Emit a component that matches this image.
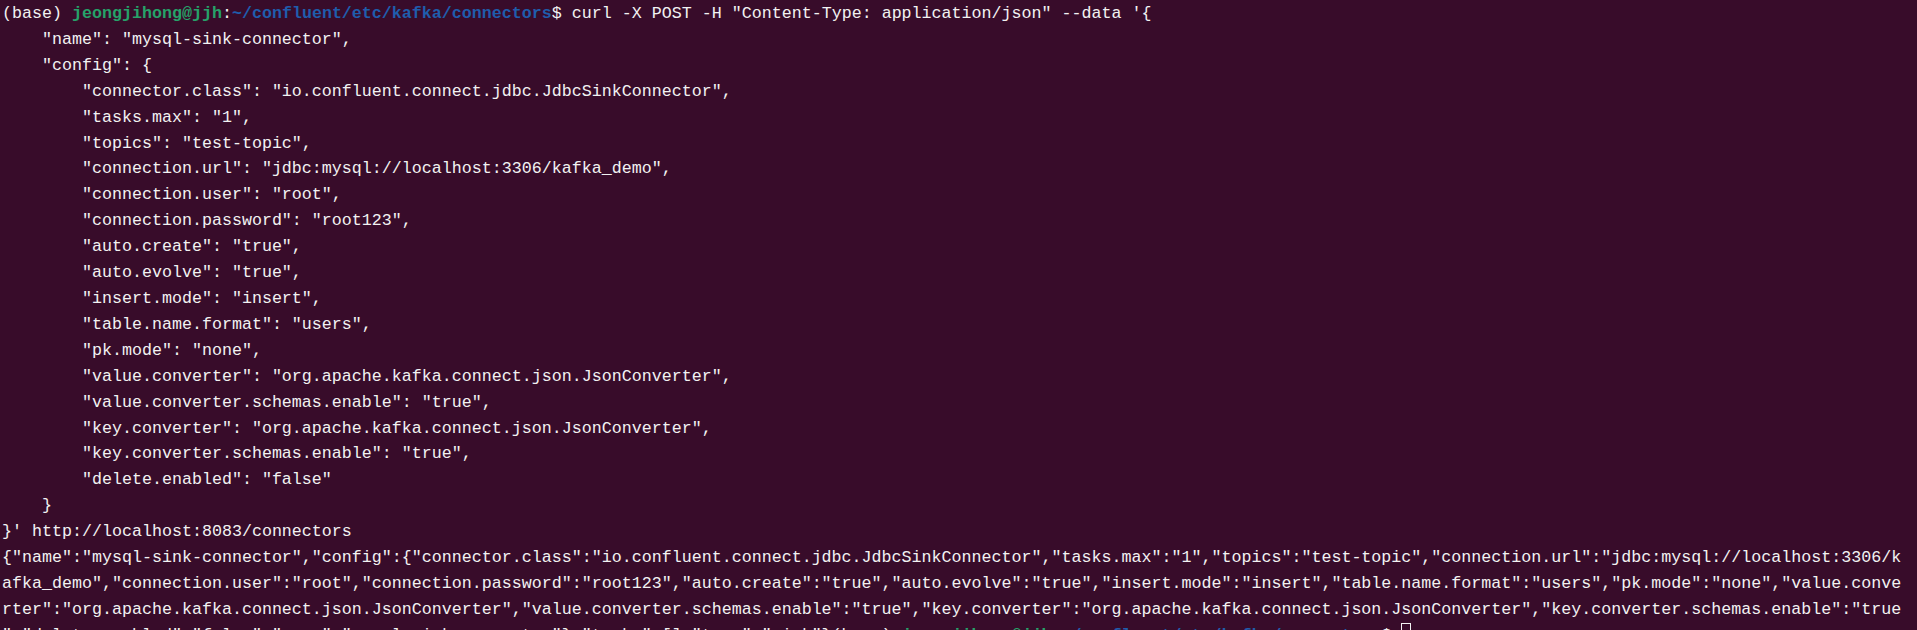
const COLS = 190;

const body = [
  '    "name": "mysql-sink-connector",',
  '    "config": {',
  '        "connector.class": "io.confluent.connect.jdbc.JdbcSinkConnector",',
  '        "tasks.max": "1",',
  '        "topics": "test-topic",',
  '        "connection.url": "jdbc:mysql://localhost:3306/kafka_demo",',
  '        "connection.user": "root",',
  '        "connection.password": "root123",',
  '        "auto.create": "true",',
  '        "auto.evolve": "true",',
  '        "insert.mode": "insert",',
  '        "table.name.format": "users",',
  '        "pk.mode": "none",',
  '        "value.converter": "org.apache.kafka.connect.json.JsonConverter",',
  '        "value.converter.schemas.enable": "true",',
  '        "key.converter": "org.apache.kafka.connect.json.JsonConverter",',
  '        "key.converter.schemas.enable": "true",',
  '        "delete.enabled": "false"',
  '    }',
  "}' http://localhost:8083/connectors",
];

const response =
  '{"name":"mysql-sink-connector","config":{"connector.class":"io.confluent.connect.jdbc.JdbcSinkConnector","tasks.max":"1","topics":"test-topic","connection.url":"jdbc:mysql://localhost:3306/kafka_demo","connection.user":"root","connection.password":"root123","auto.create":"true","auto.evolve":"true","insert.mode":"insert","table.name.format":"users","pk.mode":"none","value.converter":"org.apache.kafka.connect.json.JsonConverter","value.converter.schemas.enable":"true","key.converter":"org.apache.kafka.connect.json.JsonConverter","key.converter.schemas.enable":"true","delete.enabled":"false","name":"mysql-sink-connector"},"tasks":[],"type":"sink"}';

// terminal wraps at 190 columns
function chunk(str, size) {
  const out = [];
  for (let i = 0; i < str.length; i += size) out.push(str.slice(i, i + size));
  return out;
}

function Prompt() {
  return (
    <>
      (base){' '}
      <span className="font-bold text-[#26a269]">jeongjihong@jjh</span>:
      <span className="font-bold text-[#1f5dac]">~/confluent/etc/kafka/connectors</span>$
    </>
  );
}

export default function App() {
  const wrapped = chunk(response, COLS);
  const last = wrapped.pop();

  return (
    <div
      className="h-[630px] w-full overflow-hidden bg-[#380c2a] pl-[2px] pt-[1px] text-[16.67px] leading-[25.9px] text-[#f2f2f2]"
      style={{ fontFamily: '"Liberation Mono", "DejaVu Sans Mono", monospace' }}
    >
      <div className="whitespace-pre">
        <Prompt /> curl -X POST -H "Content-Type: application/json" --data '{'{'}
      </div>
      {body.map((line, i) => (
        <div key={i} className="whitespace-pre">
          {line}
        </div>
      ))}
      {wrapped.map((line, i) => (
        <div key={'r' + i} className="whitespace-pre">
          {line}
        </div>
      ))}
      <div className="whitespace-pre">
        {last}
        <Prompt />{' '}
        <span className="inline-block h-[22px] w-[10px] border border-[#f2f2f2] align-[-5px]" />
      </div>
    </div>
  );
}
